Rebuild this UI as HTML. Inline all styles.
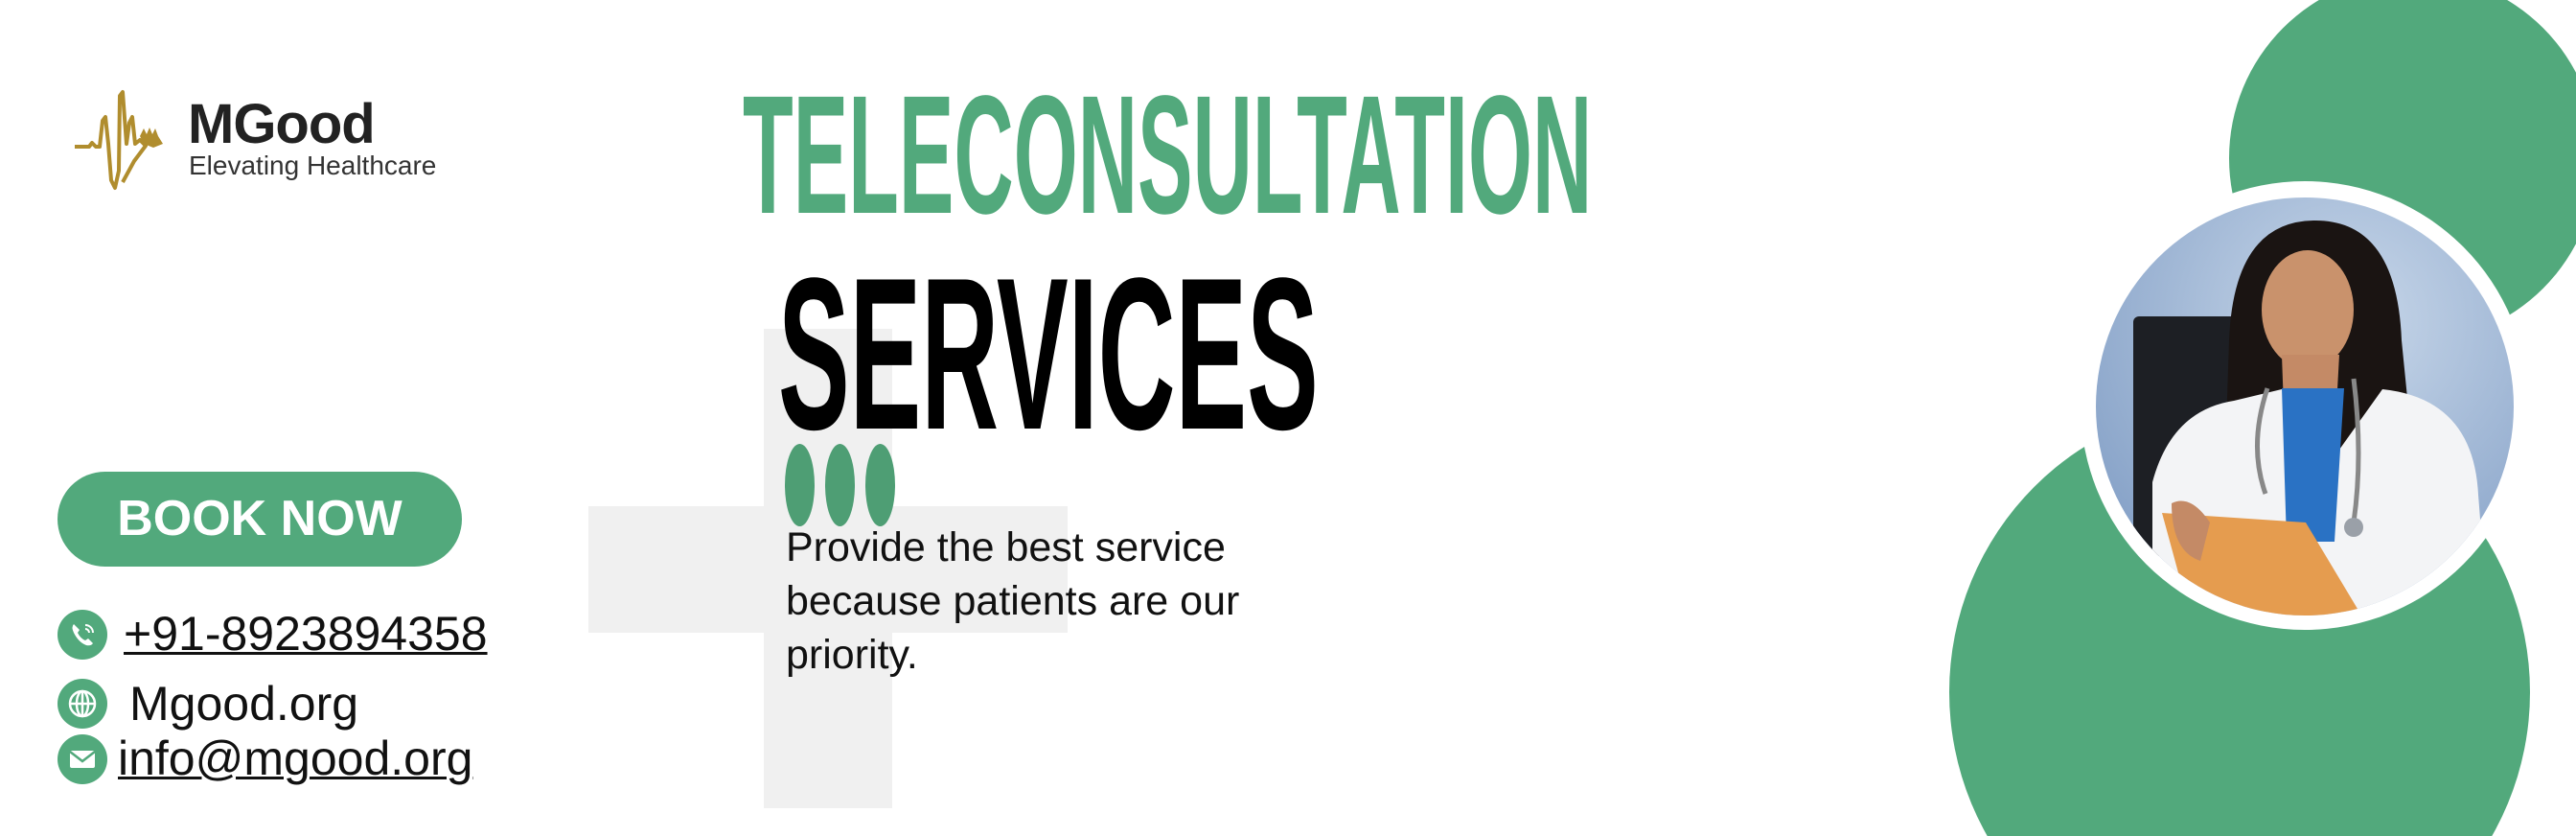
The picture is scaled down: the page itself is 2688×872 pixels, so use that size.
<!DOCTYPE html>
<html><head><meta charset="utf-8"><style>
html,body{margin:0;padding:0;width:2688px;height:872px;overflow:hidden;}
#w{width:2688px;height:872px;position:relative;overflow:hidden;background:#fff;font-family:"Liberation Sans",sans-serif;}
.a{position:absolute;}
.g{color:#52a97c;}
</style></head><body><div id="w">
<!-- gray cross -->
<div class="a" style="left:797px;top:343px;width:134px;height:500px;background:#f0f0f0"></div>
<div class="a" style="left:614px;top:528px;width:500px;height:132px;background:#f0f0f0"></div>

<!-- logo -->
<svg class="a" style="left:0;top:0" width="200" height="230">
<path d="M78,153 L93,153 L96,149 L100,153 L104,153 L107,126 L110,122 L113,150 L116,188 L120,196 L124,178 L125,100 L128,96 L132,150 L135,128 L138,122 L141,150 L146,146 L152,152 L140,168 L128,190" fill="none" stroke="#b08d2e" stroke-width="4" stroke-linejoin="round"/>
<path d="M146,142 L150,134 L153,140 L156,133 L159,140 L162,134 L165,142 L170,150 L160,154 L150,150 Z" fill="#b08d2e"/>
</svg>
<div class="a" style="left:196px;top:96px;font-size:58px;font-weight:bold;color:#222;letter-spacing:-1px">MGood</div>
<div class="a" style="left:197px;top:157px;font-size:28px;color:#333">Elevating Healthcare</div>

<!-- headings -->
<div class="a g" style="left:775px;top:74px;font-family:'Liberation Sans Narrow','Liberation Sans',sans-serif;font-weight:bold;font-size:176px;line-height:176px;transform-origin:0 0;transform:scaleX(0.49);white-space:nowrap">TELECONSULTATION</div>
<div class="a" style="left:812px;top:256px;font-family:'Liberation Sans Narrow','Liberation Sans',sans-serif;font-weight:bold;font-size:226px;line-height:226px;color:#000;transform-origin:0 0;transform:scaleX(0.495);white-space:nowrap">SERVICES</div>

<!-- dots -->
<div class="a" style="left:819px;top:463px;width:31px;height:86px;border-radius:50%;background:#4e9e74"></div>
<div class="a" style="left:861px;top:463px;width:31px;height:86px;border-radius:50%;background:#4e9e74"></div>
<div class="a" style="left:903px;top:463px;width:31px;height:86px;border-radius:50%;background:#4e9e74"></div>

<div class="a" style="left:820px;top:543px;font-size:43px;line-height:56px;color:#111">Provide the best service<br>because patients are our<br>priority.</div>

<!-- book now -->
<div class="a" style="left:60px;top:492px;width:422px;height:99px;border-radius:50px;background:#52a97c;color:#fff;font-weight:bold;font-size:52px;line-height:99px;text-align:center">BOOK NOW</div>

<!-- contacts -->
<svg class="a" style="left:60px;top:636px" width="52" height="52"><circle cx="26" cy="26" r="26" fill="#52a97c"/><path d="M17,15 q-3,3 0,9 q5,10 13,13 q5,1 7,-2 l-5,-5 l-3,2 q-5,-2 -8,-8 l2,-3 z" fill="#fff"/><path d="M29,16 a8,8 0 0 1 8,8 M29,20 a4,4 0 0 1 4,4" stroke="#fff" stroke-width="2" fill="none"/></svg>
<div class="a" style="left:129px;top:632px;font-size:50px;color:#111;text-decoration:underline;text-decoration-thickness:3px">+91-8923894358</div>

<svg class="a" style="left:60px;top:708px" width="52" height="52"><circle cx="26" cy="26" r="26" fill="#52a97c"/><g stroke="#fff" stroke-width="2.5" fill="none"><circle cx="26" cy="26" r="13"/><ellipse cx="26" cy="26" rx="6" ry="13"/><line x1="13" y1="26" x2="39" y2="26"/><line x1="26" y1="13" x2="26" y2="39"/></g></svg>
<div class="a" style="left:135px;top:705px;font-size:50px;color:#111">Mgood.org</div>

<svg class="a" style="left:60px;top:766px" width="52" height="52"><circle cx="26" cy="26" r="26" fill="#52a97c"/><rect x="13" y="17" width="26" height="18" rx="2" fill="#fff"/><path d="M13,18 L26,28 L39,18" stroke="#52a97c" stroke-width="2.5" fill="none"/></svg>
<div class="a" style="left:123px;top:762px;font-size:50px;color:#111;text-decoration:underline;text-decoration-thickness:3px">info@mgood.org</div>

<!-- right circles -->
<svg class="a" style="left:1900px;top:0" width="788" height="872">
<circle cx="618" cy="165" r="192" fill="#52a97c"/>
<circle cx="437" cy="722" r="303" fill="#52a97c"/>
<circle cx="505" cy="423" r="234" fill="#fff"/>
</svg>
<svg class="a" style="left:2186px;top:205px" width="438" height="438">
<defs><clipPath id="c"><circle cx="219" cy="219" r="218"/></clipPath>
<radialGradient id="bg" cx="0.6" cy="0.3" r="0.8"><stop offset="0" stop-color="#c9d8ea"/><stop offset="1" stop-color="#7f9cc4"/></radialGradient></defs>
<g clip-path="url(#c)">
<rect width="438" height="438" fill="url(#bg)"/>
<rect x="40" y="125" width="110" height="250" rx="6" fill="#1d1f24"/>
<path d="M140,150 q5,-125 90,-125 q85,0 90,125 l15,150 l-200,0 z" fill="#1a1412"/>
<ellipse cx="222" cy="118" rx="48" ry="62" fill="#c9926c"/>
<path d="M195,165 l60,0 l-3,55 l-55,0 z" fill="#c48a66"/>
<path d="M60,438 l0,-140 q20,-75 85,-85 l50,-12 l55,70 l50,-70 q95,10 100,110 l10,127 z" fill="#f3f4f6"/>
<path d="M195,200 l65,0 l-10,160 l-50,0 z" fill="#2a72c4"/>
<path d="M70,330 l150,10 l60,100 l-180,0 z" fill="#e59c4f"/>
<path d="M80,320 q20,-10 40,20 l-10,40 q-30,-10 -30,-60 z" fill="#c48a66"/>
<path d="M270,190 q10,80 0,150" stroke="#888" stroke-width="5" fill="none"/>
<circle cx="270" cy="345" r="10" fill="#9aa0a8"/>
<path d="M180,200 q-20,60 -2,110" stroke="#888" stroke-width="5" fill="none"/>
</g></svg>
</div></body></html>
